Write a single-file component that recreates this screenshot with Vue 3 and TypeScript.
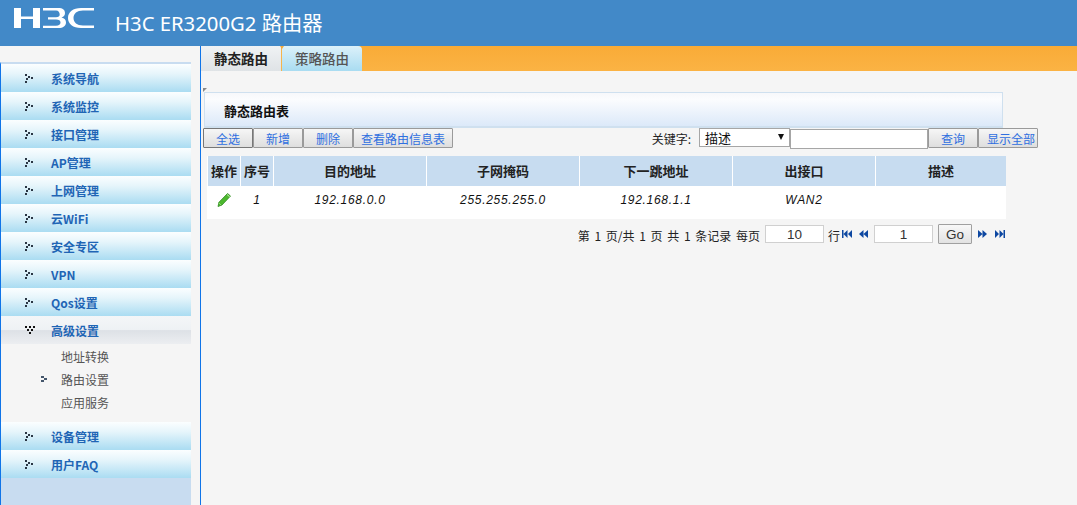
<script setup lang="ts">
const menuTop = ['系统导航', '系统监控', '接口管理', 'AP管理', '上网管理', '云WiFi', '安全专区', 'VPN', 'Qos设置']
const menuBottom = ['设备管理', '用户FAQ']
const subMenu = [
  { label: '地址转换', active: false },
  { label: '路由设置', active: true },
  { label: '应用服务', active: false },
]
const columns = ['操作', '序号', '目的地址', '子网掩码', '下一跳地址', '出接口', '描述']
const row = ['1', '192.168.0.0', '255.255.255.0', '192.168.1.1', 'WAN2', '']
</script>

<template>
  <div class="shell">
    <header class="top">
      <svg class="logo" width="80" height="20" viewBox="0 0 80 20">
        <g fill="#fff">
          <path d="M0 0h7v8.500h12V0h7v20h-7v-9H7v9H0z" />
          <path d="M29 0h15c5 0 7 2 7 5 0 2-1 3.500-3.500 4.500 3 .8 4.500 2.500 4.500 5 0 3.500-3 5.500-7.500 5.500H29v-2.200h13c3 0 4.500-1.200 4.500-3.200 0-2-1.500-3.200-4.500-3.200H34V9.200h8c2.500 0 3.700-1 3.700-2.800S44.500 2.500 42 2.500H29z" />
          <path d="M80 0v2.500H69c-6 0-9.500 3-9.500 7.500s3.500 7.500 9.500 7.500h11V20H67c-8 0-13-4-13-10S59 0 67 0z" />
        </g>
      </svg>
      <h1 class="title">H3C ER3200G2 路由器</h1>
    </header>

    <div class="body">
      <aside class="side">
        <nav class="menu">
          <a v-for="m in menuTop" :key="m" class="item"><i class="dots"></i>{{ m }}</a>
          <a class="item open"><i class="dots down"></i>高级设置</a>
          <ul class="sub">
            <li v-for="s in subMenu" :key="s.label">
              <svg v-if="s.active" class="mark" width="7" height="6" viewBox="0 0 7 6">
                <path d="M0 0h3v2H0zM3 2h3v2H3zM0 4h3v2H0z" fill="#44566c" />
              </svg>
              {{ s.label }}
            </li>
          </ul>
          <a v-for="m in menuBottom" :key="m" class="item"><i class="dots"></i>{{ m }}</a>
          <div class="menu-fill"></div>
        </nav>
      </aside>

      <main class="main">
        <div class="tabs">
          <span class="tab on">静态路由</span>
          <span class="tab off">策略路由</span>
        </div>

        <section class="panel-title">静态路由表</section>

        <div class="toolbar">
          <div class="btns">
            <button class="btn w50 focus">全选</button>
            <button class="btn w50">新增</button>
            <button class="btn w50">删除</button>
            <button class="btn w100">查看路由信息表</button>
          </div>
          <div class="search">
            <span class="kw">关键字:</span>
            <div class="select">描述<span class="caret"></span></div>
            <input class="kw-input" />
            <button class="btn w50">查询</button>
            <button class="btn w60">显示全部</button>
          </div>
        </div>

        <div class="table">
          <div v-for="c in columns" :key="c" class="th">{{ c }}</div>
          <div class="td">
            <svg width="16" height="16" viewBox="0 0 16 16">
              <path d="M11.500 1.500l3 2.500-8.500 9-4 1.500 1-4.300z" fill="#4cb82e" stroke="#2f8a1f" stroke-width=".8" />
              <path d="M11 2.500l2.700 2.300" stroke="#c8eeb5" stroke-width="1" />
              <path d="M3 11l2 2" stroke="#8ddb6c" stroke-width="1" />
            </svg>
          </div>
          <div v-for="(v, i) in row" :key="i" class="td it">{{ v }}</div>
        </div>

        <div class="pager">
          <span class="info">第 1 页/共 1 页 共 1 条记录 每页</span>
          <input class="pg-input size" value="10" />
          <span class="info row-unit">行</span>
          <svg class="arrow" width="10" height="8" viewBox="0 0 10 8"><path d="M0 0h1.500v8H0zM5.500 0v8l-4-4zM10 0v8L6 4z" fill="#0d47a1" /></svg>
          <svg class="arrow gap-l" width="9" height="8" viewBox="0 0 9 8"><path d="M4.500 0v8L0 4zM9 0v8L4.500 4z" fill="#0d47a1" /></svg>
          <input class="pg-input pg-num" value="1" />
          <button class="go">Go</button>
          <svg class="arrow gap-go" width="9" height="8" viewBox="0 0 9 8"><path d="M0 0v8l4.500-4zM4.500 0v8L9 4z" fill="#0d47a1" /></svg>
          <svg class="arrow gap-end" width="10" height="8" viewBox="0 0 10 8"><path d="M0 0v8l4-4zM4.500 0v8l4-4zM8.500 0H10v8H8.500z" fill="#0d47a1" /></svg>
        </div>
      </main>
    </div>
  </div>
</template>

<style>
html, body { margin: 0; background: #f5f5f5; }
</style>

<style scoped>
.shell {
  width: 1077px;
  height: 505px;
  overflow: hidden;
  display: flex;
  flex-direction: column;
  background: #f5f5f5;
  font-family: "Noto Sans CJK SC", "Noto Sans", sans-serif;
  font-size: 12px;
  color: #222;
}
.top {
  height: 46px;
  flex: none;
  background: #4289c8;
  display: flex;
  align-items: flex-start;
  color: #fff;
}
.logo { margin: 8px 0 0 14px; }
.title {
  margin: 7px 0 0 21px;
  font-size: 20.300px;
  line-height: 32px;
  font-weight: 400;
  white-space: nowrap;
  font-family: "Noto Sans", "Noto Sans CJK SC", sans-serif;
}
.body { flex: 1; display: flex; min-height: 0; }
.side {
  width: 200px;
  flex: none;
  border-right: 1px solid #0f74e8;
  padding-top: 16px;
  box-sizing: content-box;
  display: flex;
}
.menu {
  width: 190px;
  border-left: 1px solid #0f74e8;
  border-top: 2px solid #c8dcf0;
  display: flex;
  flex-direction: column;
}
.item {
  height: 28px;
  flex: none;
  display: flex;
  align-items: center;
  box-sizing: border-box;
  padding: 1px 0 0 50px;
  position: relative;
  font-weight: 700;
  font-size: 12px;
  color: #1f65b5;
  background: linear-gradient(#fbfeff 0%, #e6f5fb 35%, #aadcf2 100%);
}
.item.open {
  background: linear-gradient(#f4f6f8 0%, #eef1f4 50%, #dde1e6 52%, #eceef1 100%);
}
.dots {
  position: absolute;
  left: 24px;
  top: 10px;
  width: 9px;
  height: 9px;
  background:
    linear-gradient(#2a3644, #2a3644) 0 0 / 2px 2px no-repeat,
    linear-gradient(#2a3644, #2a3644) 3px 2px / 2px 2px no-repeat,
    linear-gradient(#2a3644, #2a3644) 6px 3px / 2px 2px no-repeat,
    linear-gradient(#2a3644, #2a3644) 1px 4px / 2px 2px no-repeat,
    linear-gradient(#2a3644, #2a3644) 0 7px / 2px 2px no-repeat;
}
.dots.down {
  background:
    linear-gradient(#111, #111) 0 0 / 2px 2px no-repeat,
    linear-gradient(#111, #111) 4px 0 / 2px 2px no-repeat,
    linear-gradient(#111, #111) 8px 0 / 2px 2px no-repeat,
    linear-gradient(#111, #111) 2px 3px / 2px 2px no-repeat,
    linear-gradient(#111, #111) 6px 3px / 2px 2px no-repeat,
    linear-gradient(#111, #111) 4px 6px / 2px 2px no-repeat;
  width: 10px;
}
.sub {
  list-style: none;
  margin: 0;
  padding: 1px 0 8px 60px;
  color: #555;
  font-size: 12px;
}
.sub li { height: 23px; line-height: 23px; position: relative; }
.mark { position: absolute; left: -20px; top: 8px; }
.menu-fill { flex: 1; background: #c8dcf0; }

.main { flex: 1; min-width: 0; display: flex; flex-direction: column; }
.tabs {
  height: 25px;
  flex: none;
  display: flex;
  background: linear-gradient(#f9ab37, #fbb344);
}
.tab {
  width: 80px;
  text-align: center;
  line-height: 25px;
  font-size: 13.500px;
}
.tab.on {
  font-weight: 700;
  color: #222;
  background: linear-gradient(#f0f2f4, #dfe3e6);
  border-right: 1px solid #f5b44c;
  position: relative;
}
.tab.on::after {
  content: "";
  position: absolute;
  right: -3px;
  top: 0;
  border-left: 2.500px solid transparent;
  border-right: 2.500px solid transparent;
  border-top: 3px solid #f5a93a;
}
.tab.off {
  color: #555;
  font-weight: 500;
  background: linear-gradient(#dcf1fa, #a9dcf1);
  border-top-right-radius: 4px;
}
.panel-title {
  margin: 21px 0 0 3px;
  width: 799px;
  height: 36px;
  box-sizing: border-box;
  border: 1px solid #cfe0ef;
  border-bottom-width: 2px;
  background: linear-gradient(#f7f8fb 0%, #fbfcfe 20%, #dce9f9 100%);
  font-weight: 700;
  font-size: 13px;
  line-height: 36px;
  padding-left: 19px;
  color: #111;
  position: relative;
}
.panel-title::before {
  content: "";
  position: absolute;
  left: -2px;
  top: -5px;
  border-top: 4px solid #888;
  border-right: 4px solid transparent;
}
.toolbar {
  margin: 0 0 0 2px;
  width: 835px;
  display: flex;
  justify-content: space-between;
  align-items: flex-start;
}
.btns, .search { display: flex; }
.btn {
  height: 20px;
  padding: 0;
  box-sizing: border-box;
  border: 1px solid #9a9a9a;
  border-radius: 1px;
  background: linear-gradient(#f6f6f6, #dedede);
  color: #2f6fe0;
  font-family: inherit;
  font-size: 12px;
  line-height: 17px;
}
.w50 { width: 50px; }
.w60 { width: 60px; padding-left: 6px; }
.w100 { width: 100px; }
.focus { border-color: #777; }
.search { align-items: flex-start; }
.kw { margin-right: 8px; line-height: 22px; color: #222; }
.select {
  width: 91px;
  height: 19px;
  box-sizing: border-box;
  background: #fff;
  border: 1px solid #a6a6a6;
  padding-left: 5px;
  line-height: 18px;
  color: #111;
  position: relative;
  font-size: 13px;
}
.caret {
  position: absolute;
  right: 5px;
  top: 5px;
  border-left: 3px solid transparent;
  border-right: 3px solid transparent;
  border-top: 6px solid #111;
}
.kw-input {
  width: 138px;
  height: 20px;
  box-sizing: border-box;
  border: 1px solid #a6a6a6;
  background: #fff;
  margin: 1px 0 0 0;
  padding: 0;
  outline: none;
}
.table {
  margin: 6px 0 0 6px;
  width: 799px;
  box-sizing: border-box;
  padding-left: 1px;
  display: grid;
  grid-template-columns: 32px 32px 152px 152px 152px 142px 130px;
  grid-template-rows: 30px 33px;
  column-gap: 1px;
  background: #fff;
}
.th {
  background: #c7dcf0;
  font-weight: 700;
  text-align: center;
  line-height: 30px;
  font-size: 13px;
  color: #222;
}
.td {
  background: #fff;
  display: flex;
  align-items: center;
  justify-content: center;
  padding-bottom: 5px;
  box-sizing: border-box;
}
.td.it {
  font-style: italic;
  font-size: 12px;
  letter-spacing: .7px;
  font-family: "Liberation Sans", "Noto Sans CJK SC", sans-serif;
  color: #111;
}
.pager {
  margin: 5px 0 0 0;
  width: 804px;
  display: flex;
  align-items: center;
  justify-content: flex-end;
  height: 20px;
  font-size: 12px;
  color: #222;
}
.info { padding-top: 2px; word-spacing: 2px; }
.pg-input {
  height: 18px;
  box-sizing: border-box;
  border: 1px solid #d0d0d0;
  background: #fff;
  text-align: center;
  font-family: "Liberation Sans", sans-serif;
  font-size: 13.500px;
  padding: 0;
  outline: none;
  color: #333;
}
.size { width: 59px; margin-left: 5px; }
.pg-num { width: 59px; margin-left: 6px; }
.row-unit { margin-left: 4px; margin-right: 2px; }
.arrow { flex: none; }
.gap-l { margin-left: 7px; }
.go {
  width: 34px;
  height: 20px;
  margin-left: 5px;
  box-sizing: border-box;
  padding: 0;
  border: 1px solid #a0a0a0;
  border-radius: 1px;
  background: linear-gradient(#f8f8f8, #e2e2e2);
  font-family: "Liberation Sans", sans-serif;
  font-size: 13.500px;
  color: #333;
}
.gap-go { margin-left: 6px; }
.gap-end { margin-left: 8px; }
</style>
